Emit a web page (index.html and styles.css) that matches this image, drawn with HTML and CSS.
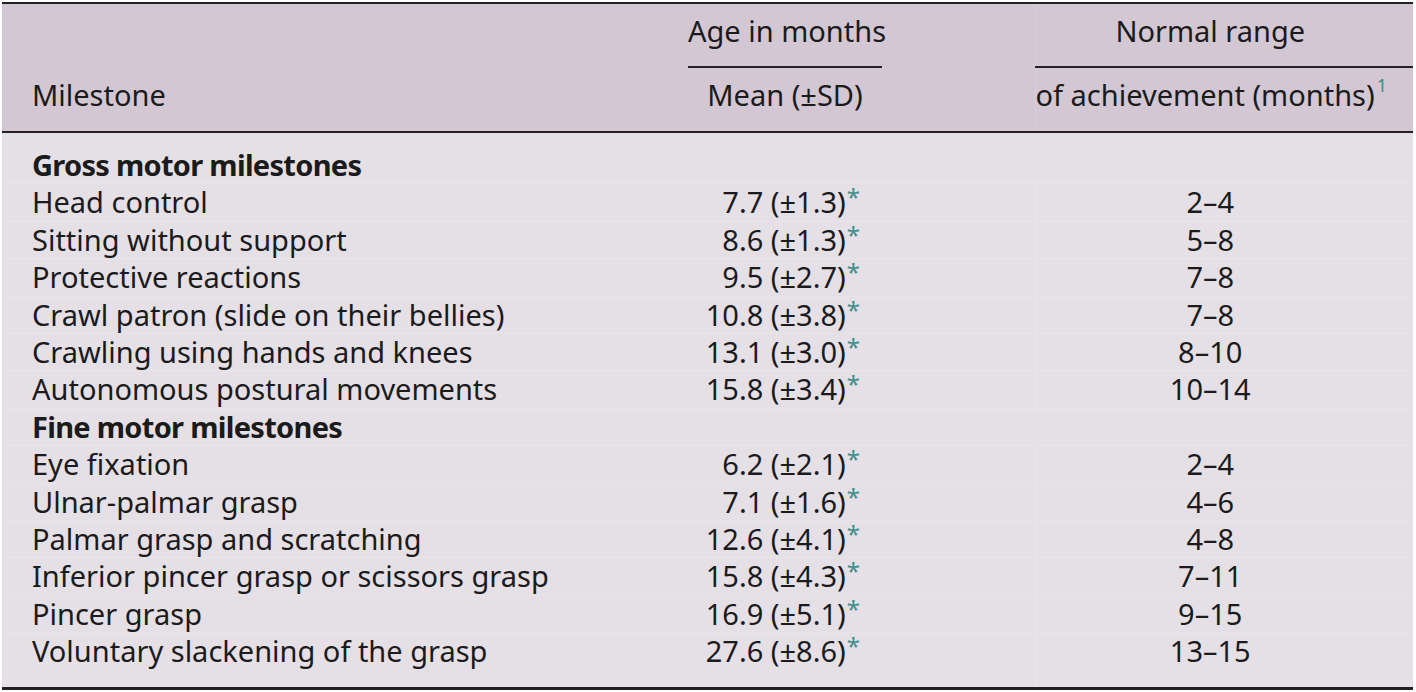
FILE: index.html
```html
<!DOCTYPE html>
<html lang="en">
<head>
<meta charset="utf-8">
<title>Motor milestones</title>
<link rel="stylesheet" href="styles.css">
</head>
<body>
<table class="milestones">
  <colgroup>
    <col class="c-name">
    <col class="c-mean">
    <col class="c-gap">
    <col class="c-range">
  </colgroup>
  <thead>
    <tr class="h-top">
      <th class="name" rowspan="2">Milestone</th>
      <th class="grp">Age in months</th>
      <th class="gap" rowspan="2"></th>
      <th class="grp range">Normal range</th>
    </tr>
    <tr class="h-sub">
      <th class="sub">Mean (±SD)</th>
      <th class="sub range">of achievement (months)<sup class="note">1</sup></th>
    </tr>
  </thead>
  <tbody>
    <tr class="first"><td class="name section" colspan="4">Gross motor milestones</td></tr>
    <tr><td class="name">Head control</td><td class="mean">7.7 (±1.3)<sup class="sig">*</sup></td><td class="gap"></td><td class="range">2–4</td></tr>
    <tr><td class="name">Sitting without support</td><td class="mean">8.6 (±1.3)<sup class="sig">*</sup></td><td class="gap"></td><td class="range">5–8</td></tr>
    <tr><td class="name">Protective reactions</td><td class="mean">9.5 (±2.7)<sup class="sig">*</sup></td><td class="gap"></td><td class="range">7–8</td></tr>
    <tr><td class="name">Crawl patron (slide on their bellies)</td><td class="mean">10.8 (±3.8)<sup class="sig">*</sup></td><td class="gap"></td><td class="range">7–8</td></tr>
    <tr><td class="name">Crawling using hands and knees</td><td class="mean">13.1 (±3.0)<sup class="sig">*</sup></td><td class="gap"></td><td class="range">8–10</td></tr>
    <tr><td class="name">Autonomous postural movements</td><td class="mean">15.8 (±3.4)<sup class="sig">*</sup></td><td class="gap"></td><td class="range">10–14</td></tr>
    <tr><td class="name section" colspan="4">Fine motor milestones</td></tr>
    <tr><td class="name">Eye fixation</td><td class="mean">6.2 (±2.1)<sup class="sig">*</sup></td><td class="gap"></td><td class="range">2–4</td></tr>
    <tr><td class="name">Ulnar-palmar grasp</td><td class="mean">7.1 (±1.6)<sup class="sig">*</sup></td><td class="gap"></td><td class="range">4–6</td></tr>
    <tr><td class="name">Palmar grasp and scratching</td><td class="mean">12.6 (±4.1)<sup class="sig">*</sup></td><td class="gap"></td><td class="range">4–8</td></tr>
    <tr><td class="name">Inferior pincer grasp or scissors grasp</td><td class="mean">15.8 (±4.3)<sup class="sig">*</sup></td><td class="gap"></td><td class="range">7–11</td></tr>
    <tr><td class="name">Pincer grasp</td><td class="mean">16.9 (±5.1)<sup class="sig">*</sup></td><td class="gap"></td><td class="range">9–15</td></tr>
    <tr class="last"><td class="name">Voluntary slackening of the grasp</td><td class="mean">27.6 (±8.6)<sup class="sig">*</sup></td><td class="gap"></td><td class="range">13–15</td></tr>
  </tbody>
</table>
</body>
</html>
```
FILE: styles.css
```css
html, body {
  margin: 0;
  padding: 0;
  background: #ffffff;
}
body {
  padding: 2px 0 0 2px;
  font-family: "Noto Sans", "Open Sans", sans-serif;
  font-size: 29px;
  color: #1b1b1b;
}
.milestones {
  width: 1411px;
  table-layout: fixed;
  border-collapse: collapse;
  border-top: 2px solid #222222;
  border-bottom: 3px solid #222222;
}
.c-name { width: 686px; }
.c-mean { width: 194px; }
.c-gap { width: 153px; }
.c-range { width: 378px; }

thead {
  border-bottom: 2px solid #222222;
}
thead th {
  background: #d3c7d4;
  font-weight: 400;
  line-height: 36px;
  vertical-align: top;
  text-align: center;
  white-space: nowrap;
}
.h-top th { padding: 9px 0 17px; }
.h-top th.grp { border-bottom: 2px solid #222222; }
.h-sub th { padding: 9px 0 18px; }
thead th.name {
  text-align: left;
  padding: 73px 0 0 30px;
}
thead th.gap { padding: 0; }
thead th.range { padding-right: 28px; border-left: 1px solid #d8cdd9; }

.note, .sig {
  color: #3f8f8b;
  line-height: 0;
}
.note {
  font-size: 18px;
  vertical-align: 14px;
  margin-left: 2px;
}
.sig {
  font-size: 24px;
  vertical-align: 7px;
  margin-left: 1px;
}

tbody td {
  background: #e5dfe6;
  padding: 0;
  line-height: 36.4px;
  border-bottom: 1px solid #e9e4ea;
  white-space: nowrap;
}
tbody td.name { padding-left: 30px; }
tbody td.section { font-weight: 700; letter-spacing: -0.7px; }
tbody td.mean { text-align: right; padding-right: 22px; }
tbody td.range { text-align: center; padding-right: 28px; border-left: 1px solid #e9e4ea; }
tbody tr.first td { padding-top: 14px; }
tbody tr.last td { padding-bottom: 17px; border-bottom: 0; }
```
